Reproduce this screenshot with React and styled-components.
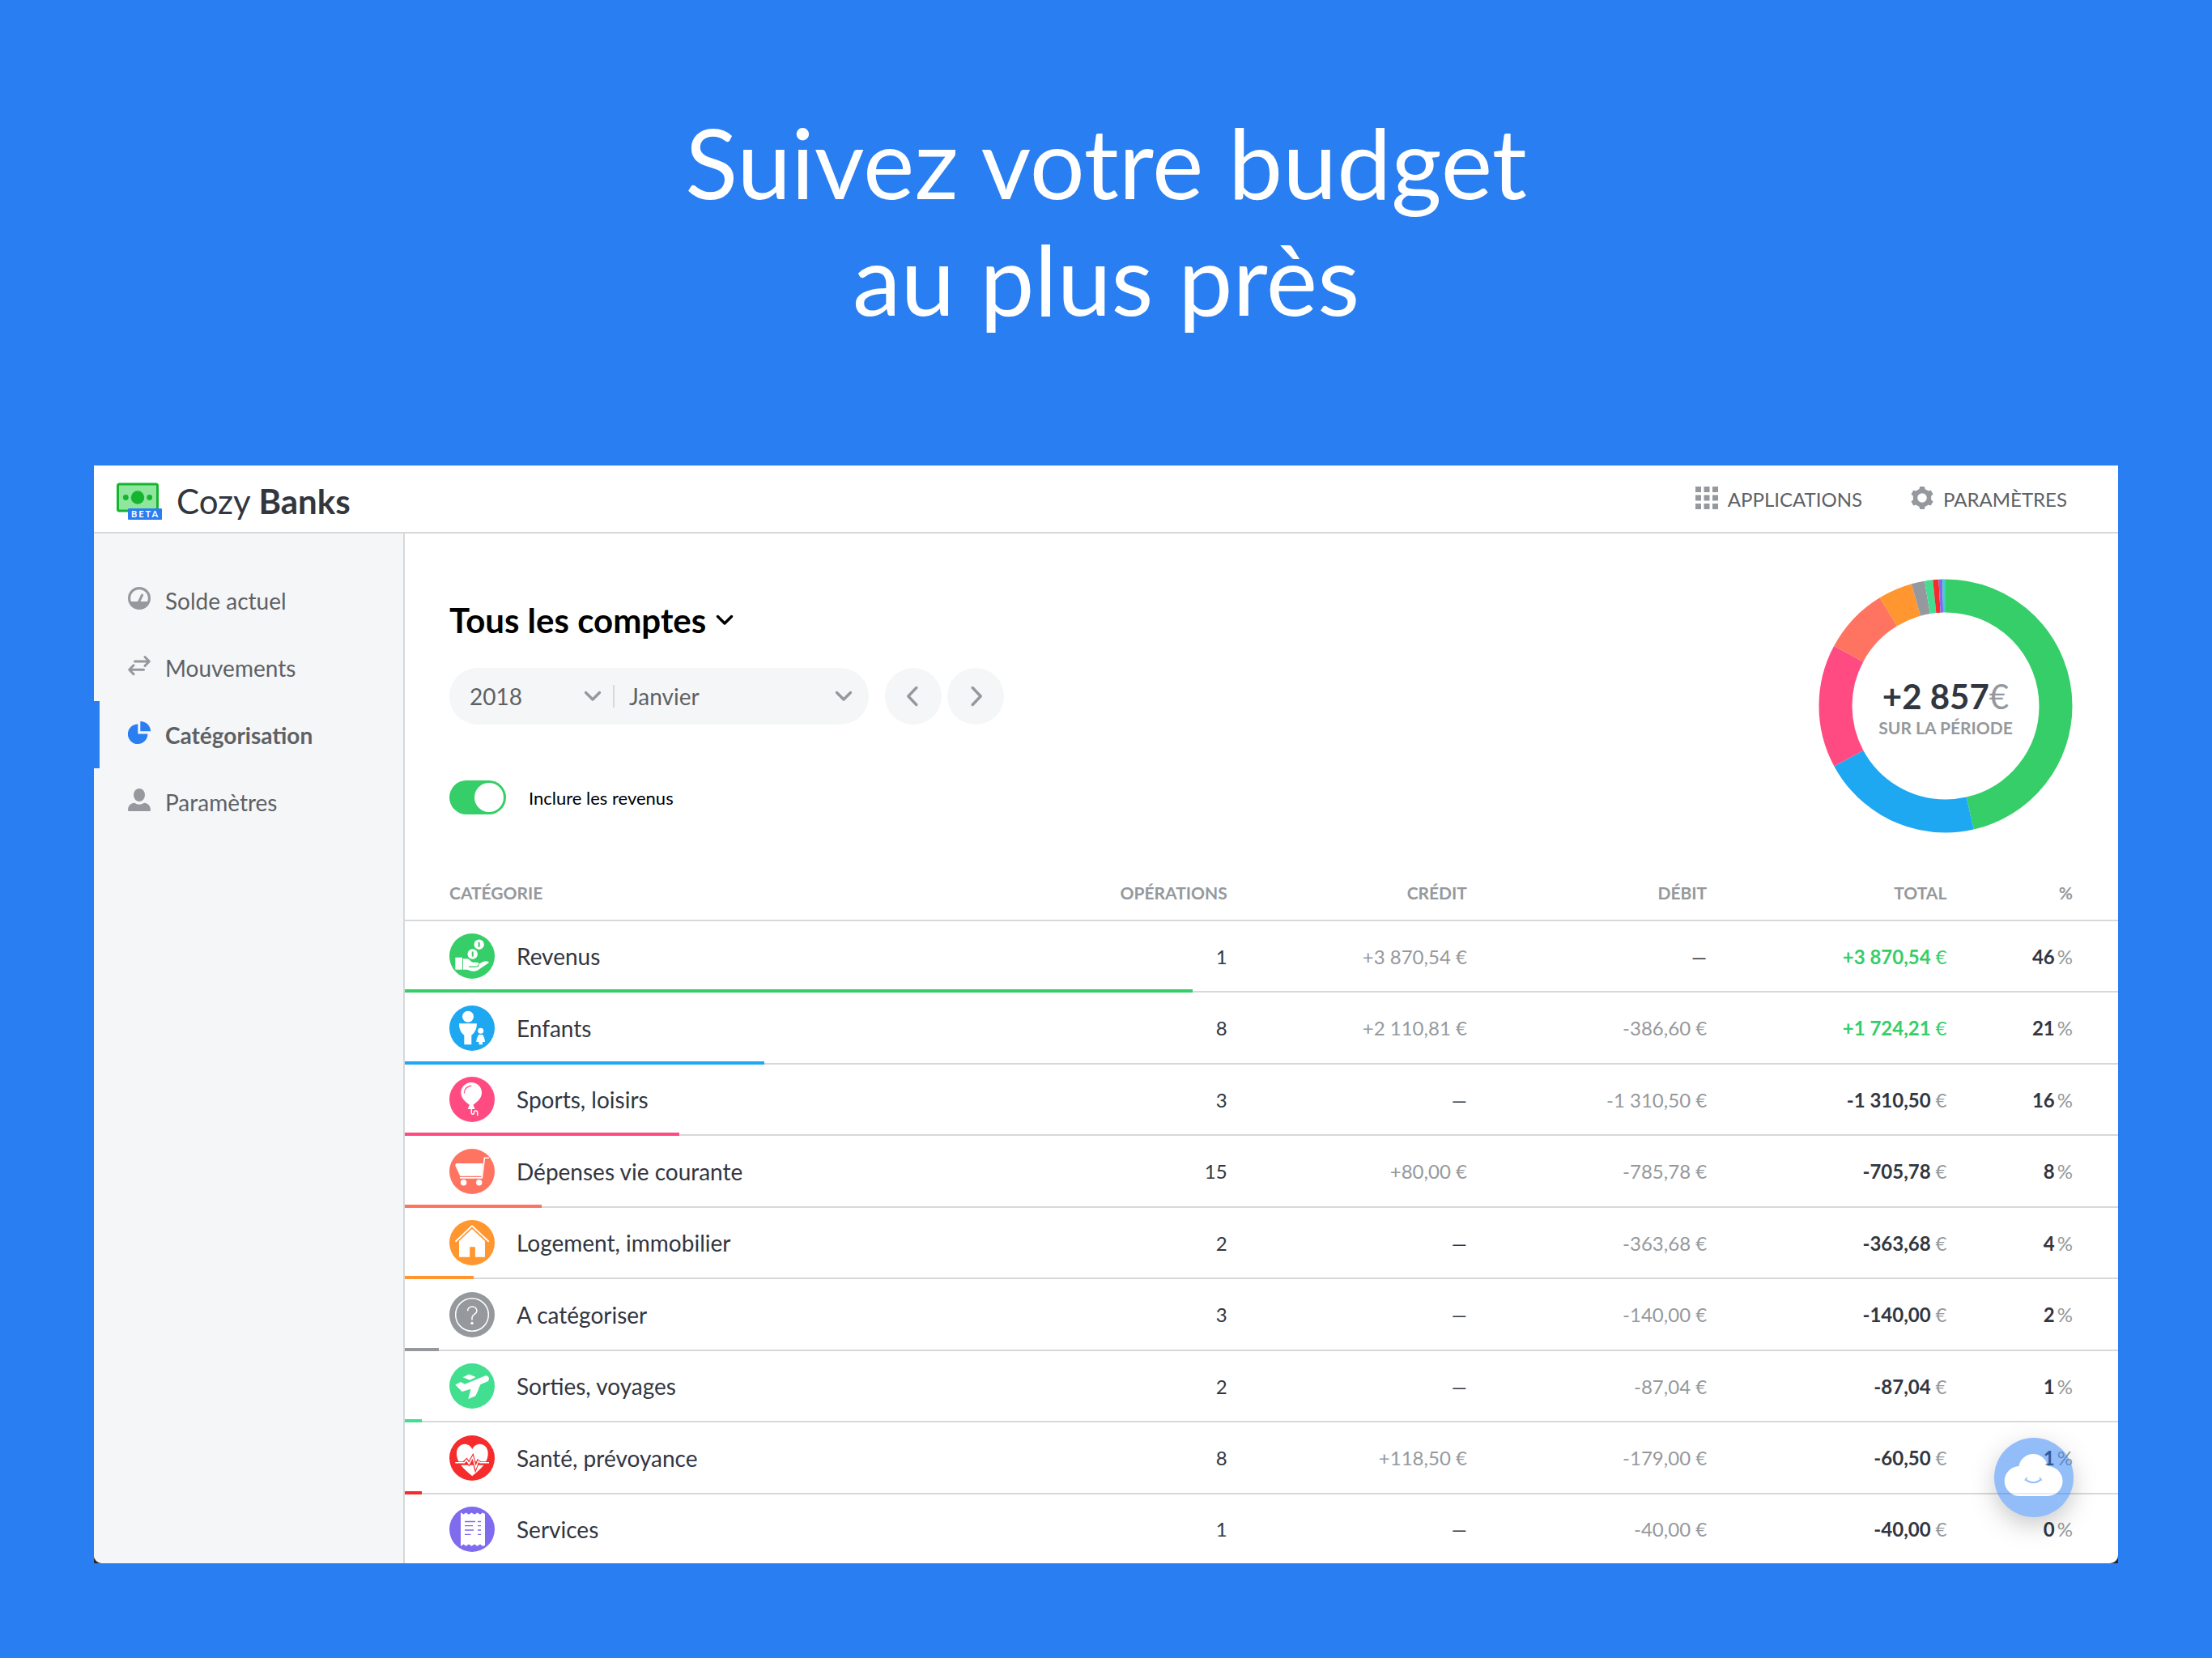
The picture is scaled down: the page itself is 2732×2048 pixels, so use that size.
import React, { useState } from "react";
import styled, { createGlobalStyle } from "styled-components";

const color = {
  blue: "#297ef2",
  charcoal: "#32363f",
  slate: "#5d6165",
  grey: "#95999d",
  silver: "#d6d8da",
  pale: "#f5f6f7",
  green: "#35ce68",
};

const GlobalStyle = createGlobalStyle`
  *, *::before, *::after { box-sizing: border-box; }
  body {
    margin: 0;
    background: ${color.blue};
    color: ${color.charcoal};
    font-family: Lato, "Liberation Sans", sans-serif;
    font-size: 24px;
  }
  button, select, input { font: inherit; color: inherit; margin: 0; }
  button { border: 0; padding: 0; background: none; cursor: pointer; }
`;

const Page = styled.div`
  min-height: 100vh;
  padding: 128px 116px 116px;
`;

const Headline = styled.h1`
  margin: 0 0 159px;
  color: #fff;
  font-size: 120px;
  font-weight: 400;
  line-height: 144px;
  text-align: center;
`;

const Frame = styled.div`
  background: #24292e;
`;

const AppWindow = styled.div`
  position: relative;
  background: #fff;
  border-radius: 0 0 10px 10px;
  overflow: hidden;
`;

const TopBar = styled.header`
  display: flex;
  align-items: center;
  justify-content: space-between;
  height: 84px;
  padding: 0 63px 0 28px;
  border-bottom: 2px solid ${color.silver};
`;

const Brand = styled.a`
  display: flex;
  align-items: center;
  gap: 18px;
  padding-top: 6px;
  color: ${color.charcoal};
  font-size: 42px;
  line-height: 48px;
  text-decoration: none;
`;

const Logo = styled.span`
  position: relative;
  display: block;
  width: 56px;
  height: 46px;
`;

const BetaBadge = styled.span`
  position: absolute;
  right: 0;
  bottom: 0;
  padding-left: 4px;
  width: 42px;
  border-radius: 1px;
  background: ${color.blue};
  color: #fff;
  font-size: 11px;
  font-weight: 700;
  letter-spacing: 2px;
  line-height: 14px;
`;

const TopLinks = styled.nav`
  display: flex;
  gap: 60px;
`;

const TopLink = styled.a`
  display: flex;
  align-items: center;
  gap: 12px;
  color: ${color.slate};
  font-size: 24px;
  text-decoration: none;
  text-transform: uppercase;

  svg { color: ${color.grey}; margin-bottom: 2px; }
`;

const Body = styled.div`
  display: flex;
`;

const Sidebar = styled.nav`
  flex: none;
  width: 384px;
  padding-top: 41px;
  background: ${color.pale};
  border-right: 2px solid ${color.silver};
`;

const NavItem = styled.a`
  display: flex;
  align-items: center;
  gap: 18px;
  height: 83px;
  padding-left: 35px;
  border-left: 7px solid ${(p) => (p.$active ? color.blue : "transparent")};
  color: ${color.slate};
  font-size: 28px;
  font-weight: ${(p) => (p.$active ? 700 : 400)};
  text-decoration: none;

  svg {
    margin-bottom: 6px;
    color: ${(p) => (p.$active ? color.blue : color.grey)};
  }
`;

const Main = styled.main`
  flex: 1;
  min-width: 0;
`;

const Summary = styled.section`
  display: flex;
  justify-content: space-between;
  align-items: flex-start;
  padding: 56px 56px 0 55px;
`;

const Filters = styled.div`
  display: flex;
  flex-direction: column;
  align-items: flex-start;
  padding-top: 26px;
`;

const AccountButton = styled.button`
  display: flex;
  align-items: center;
  gap: 12px;
  color: #000;
  font-size: 42px;
  font-weight: 700;
  line-height: 50px;
`;

const PeriodRow = styled.div`
  display: flex;
  align-items: center;
  gap: 7px;
  margin-top: 34px;
`;

const PeriodPill = styled.div`
  display: flex;
  align-items: center;
  height: 70px;
  margin-right: 13px;
  padding: 0 20px 0 25px;
  border-radius: 35px;
  background: ${color.pale};
  color: ${color.slate};
`;

const Field = styled.label`
  display: grid;
  align-items: center;
  width: ${(p) => p.$width}px;

  & > * { grid-area: 1 / 1; }
  svg { justify-self: end; pointer-events: none; color: ${color.grey}; }
`;

const Select = styled.select`
  appearance: none;
  width: 100%;
  height: 70px;
  padding: 0;
  border: 0;
  background: none;
  font-size: 28px;
`;

const Divider = styled.span`
  width: 2px;
  height: 28px;
  margin: 0 18px 0 14px;
  background: ${color.silver};
`;

const RoundButton = styled.button`
  display: flex;
  align-items: center;
  justify-content: center;
  width: 70px;
  height: 70px;
  border-radius: 50%;
  background: ${color.pale};
  color: ${color.grey};
`;

const ToggleLabel = styled.label`
  display: flex;
  align-items: center;
  gap: 28px;
  margin-top: 69px;
  color: #000;
  font-size: 22px;
`;

const Switch = styled.input`
  appearance: none;
  display: flex;
  align-items: center;
  width: 70px;
  height: 42px;
  padding: 0 3px;
  border-radius: 21px;
  background: ${(p) => (p.checked ? color.green : color.silver)};
  justify-content: ${(p) => (p.checked ? "flex-end" : "flex-start")};

  &::before {
    content: "";
    width: 36px;
    height: 36px;
    border-radius: 50%;
    background: #fff;
  }
`;

const DonutBox = styled.div`
  display: grid;
  place-items: center;
  width: 314px;
  height: 314px;

  & > * { grid-area: 1 / 1; }
`;

const DonutText = styled.div`
  padding-top: 6px;
  text-align: center;
`;

const DonutAmount = styled.div`
  font-size: 42px;
  font-weight: 700;
  line-height: 48px;
`;

const DonutCaption = styled.div`
  color: ${color.grey};
  font-size: 21px;
  font-weight: 700;
  line-height: 30px;
  text-transform: uppercase;
`;

const Unit = styled.span`
  color: ${(p) => (p.$inherit ? "inherit" : color.grey)};
  font-weight: 400;
`;

const PercentUnit = styled(Unit)`
  margin-left: 3px;
`;

const Table = styled.table`
  width: 100%;
  margin-top: 40px;
  border-collapse: separate;
  border-spacing: 0;
  table-layout: fixed;
`;

const Column = styled.col`
  width: ${(p) => p.$width}%;
`;

const HeadRow = styled.tr`
  height: 69px;
`;

const HeadCell = styled.th`
  padding: 0;
  border-bottom: 2px solid ${color.silver};
  color: ${color.grey};
  font-size: 21px;
  font-weight: 700;
  text-align: right;
  text-transform: uppercase;

  &:first-child { padding-left: 55px; text-align: left; }
  &:last-child { padding-right: 56px; }
`;

const Row = styled.tr`
  position: relative;
  height: 88px;

  &:nth-child(even) { height: 89px; }
  &:last-child { height: 85px; }
  &:last-child > td { border-bottom: 0; }
`;

const Cell = styled.td`
  padding: 0;
  border-bottom: 2px solid ${color.silver};
  color: ${(p) => (p.$muted ? color.grey : p.$positive ? color.green : color.charcoal)};
  font-weight: ${(p) => (p.$strong ? 700 : 400)};
  text-align: right;

  &:last-child { padding-right: 56px; }
`;

const NameCell = styled(Cell)`
  padding-left: 55px;
  font-size: 28px;
  text-align: left;
`;

const Name = styled.div`
  display: flex;
  align-items: center;
  gap: 27px;
`;

const Share = styled.span`
  position: absolute;
  left: 0;
  bottom: 0;
  height: 4px;
  background: ${(p) => p.$tint};
`;

const Assistant = styled.button`
  position: absolute;
  right: 55px;
  bottom: 57px;
  width: 98px;
  height: 98px;
  border-radius: 50%;
  background: ${color.blue};
  box-shadow: 0 10px 28px rgba(0, 0, 0, 0.4);
  opacity: 0.5;
`;

const svgProps = (w, h = w) => ({
  width: w,
  height: h,
  viewBox: `0 0 ${w} ${h}`,
  fill: "none",
  "aria-hidden": true,
});

const ChevronDown = ({ width = 3.4 }) => (
  <svg {...svgProps(22, 14)} stroke="currentColor" strokeWidth={width} strokeLinecap="round" strokeLinejoin="round">
    <path d="M2.5 2.5 11 11 19.5 2.5" />
  </svg>
);

const ChevronSide = ({ next }) => (
  <svg {...svgProps(16, 26)} stroke="currentColor" strokeWidth="3.4" strokeLinecap="round" strokeLinejoin="round">
    <path d={next ? "M4.2 2.5 14.2 13 4.2 23.5" : "M11.8 2.5 1.8 13 11.8 23.5"} />
  </svg>
);

const GridIcon = () => (
  <svg {...svgProps(28)} fill="currentColor">
    {[0, 10.5, 21].map((y) =>
      [0, 10.5, 21].map((x) => <rect key={`${x}-${y}`} x={x} y={y} width="7" height="7" />)
    )}
  </svg>
);

const GearIcon = () => (
  <svg {...svgProps(28)} fill="currentColor">
    <circle cx="14" cy="14" r="8.5" fill="none" stroke="currentColor" strokeWidth="5.4" />
    {[0, 60, 120, 180, 240, 300].map((a) => (
      <path key={a} d="M11.2 0h5.6l1.2 5h-8z" transform={`rotate(${a} 14 14)`} />
    ))}
  </svg>
);

const GaugeIcon = () => (
  <svg {...svgProps(28)} stroke="currentColor">
    <circle cx="14" cy="14" r="12.4" strokeWidth="3.2" />
    <path d="M1 18h26a13.6 13.6 0 0 1-26 0z" fill="currentColor" stroke="none" />
    <path d="M13.5 18.5 17.6 10" strokeWidth="3" strokeLinecap="round" />
  </svg>
);

const ArrowsIcon = () => (
  <svg {...svgProps(28)} stroke="currentColor" strokeWidth="3" strokeLinecap="round" strokeLinejoin="round">
    <path d="M8.5 9H26M21 3.5 26.3 9 21 14.5" />
    <path d="M19.5 19.2H2M7 13.8 1.7 19.2 7 24.7" />
  </svg>
);

const PieIcon = () => (
  <svg {...svgProps(28)} fill="currentColor">
    <path d="M12.3 3.4A12.3 12.3 0 1 0 24.4 15.5H12.3z" />
    <path d="M15.3 0A12.7 12.2 0 0 1 28 12.2H15.3z" />
  </svg>
);

const PersonIcon = () => (
  <svg {...svgProps(28)} fill="currentColor">
    <ellipse cx="14" cy="8" rx="7" ry="8" />
    <path d="M1.2 28Q0 28 0 26.8C0 21 3.500 18.200 8 17.800Q14 21.500 20 17.800C24.500 18.200 28 21 28 26.800Q28 28 26.800 28z" />
  </svg>
);

const BankNote = () => (
  <svg {...svgProps(56, 46)}>
    <rect x="1.500" y="2" width="49" height="33" rx="2" fill="#8fe69d" stroke="#15b530" strokeWidth="3" />
    <circle cx="26" cy="18.500" r="8.200" fill="#15b530" />
    <circle cx="11.300" cy="18.500" r="3.400" fill="#15b530" />
    <circle cx="40.700" cy="18.500" r="3.400" fill="#15b530" />
  </svg>
);

const glyphs = {
  income: (c) => (
    <>
      <circle cx="36.700" cy="13.700" r="6.200" />
      <circle cx="28.700" cy="25.500" r="6.200" />
      <path d="M36.700 11.500v4.500M28.700 23.300v4.500" stroke={c} strokeWidth="2" strokeLinecap="round" />
      <path d="M7.300 29.700h8.800v15H7.300z" />
      <path d="M17 31.300h5c3.500 0 4 4.500 8 4.500h4c1.600 0 2.400.8 2.500 2L41.500 35c3-1.200 6.500-.8 7.500 1L35.500 45.300c-3 1.800-7 1.800-10 .8L22 44.700h-5z" />
      <path d="M24 41.200h8.500c2.400 0 3.600-1.200 3.800-3" fill="none" stroke={c} strokeWidth="1.200" />
    </>
  ),
  children: () => (
    <>
      <circle cx="23" cy="13.700" r="7" />
      <path d="M12 22.300h21.800c.4 6-2.300 11.300-6.500 14.400v11.600h-9V36.700c-4.200-3.100-6.700-8.400-6.300-14.400z" />
      <circle cx="38.700" cy="31.200" r="3.500" />
      <path d="M36.200 36h5c1.600 2.600 2.600 5.500 2.800 9h-3v3.300h-4.600V45h-3.200c.3-3.500 1.300-6.400 3-9z" />
    </>
  ),
  leisure: (c) => (
    <>
      <path d="M27.200 7C34.500 7 40 12.600 40 19.700c0 7.300-6.300 11.800-10.500 15.100l2 5.200h-8.800l2.200-5.200C20.600 31.500 14.300 27 14.300 19.700 14.300 12.600 19.900 7 27.200 7z" />
      <path d="M18.300 20.500c.3-5 3.700-8.700 9-9.300" fill="none" stroke={c} strokeWidth="1.200" />
      <path d="M27.300 39.500v4.700c0 3.300 3.700 2.300 3.200-.2-.5-2.500 4-2.700 4.200.2v3.800" fill="none" stroke="#fff" strokeWidth="1.500" />
    </>
  ),
  shopping: () => (
    <>
      <path d="M9 18h32.500L40 33.700H13.300L7.500 21.300Q7 18 9 18z" />
      <path d="M13 35.900h27.300L43.400 11.300H49" fill="none" stroke="#fff" strokeWidth="1.600" />
      <circle cx="17.600" cy="41.700" r="3.700" />
      <circle cx="36.700" cy="41.700" r="3.700" />
    </>
  ),
  home: () => (
    <>
      <path d="M7.500 26.700 28 7.200 48.700 26.700" fill="none" stroke="#fff" strokeWidth="1.900" />
      <path d="M28 10.900 44 26v19.700H31.900V33.200h-6.700v12.500H12V26z" />
    </>
  ),
  unknown: () => (
    <g fill="none" stroke="#fff" strokeWidth="1.500">
      <circle cx="28" cy="28" r="20.300" />
      <path d="M22.600 23.300c0-7.200 11.300-7.200 11.300.2 0 4-5.900 3.700-5.900 8v3" />
      <circle cx="28" cy="38.400" r="1.700" fill="#fff" stroke="none" />
    </g>
  ),
  travel: () => (
    <>
      <path d="M7.300 26.500 14 23l5 2.700 25-10.300c4.700-1 6.500 4 3.500 6.800l-9 3.700C36 31 34.700 36.500 32 40.500L23.300 44l3.200-12.200-10.800 3.300z" />
      <path d="M16.500 17.300 24.300 13.600 32.700 17 25.300 20.800z" />
    </>
  ),
  health: (c) => (
    <>
      <path d="M28.300 50.300C21 44 9 35.500 9 22.300 9 9.500 23.500 6.800 28.300 17.200 33 6.800 47.700 9.500 47.700 22.300 47.700 35.500 35.600 44 28.300 50.300z" />
      <path d="M7.300 34.500H49" fill="none" stroke={c} strokeWidth="4.500" />
      <path d="M18 33.700 21.300 30.500 24.300 35 28.800 26.800 32.300 40.300 35.500 32 38 33.700" fill="none" stroke={c} strokeWidth="3.800" />
      <path d="M7.300 33.700H18.500L21.300 30.500 24.300 35.200 28.800 26.800 32.500 40.300 35.500 32 38 33.700H49" fill="none" stroke="#fff" strokeWidth="1.500" />
    </>
  ),
  services: (c) => (
    <>
      <path d="M14 7.300 17.500 9.500 20.500 7.500 24 9.700 27.500 7.500 31 9.700 34.500 7.500 38 9.700 41 7.500 44 9V48l-3 .7-3-2.200-3.500 2.200-3.500-2.200-3.500 2.200-3.500-2.200-3.500 2.200-3-2.200L14 49z" />
      <path d="M19 18.500h13M19 23.700h10M19 29h11M19 34.300h7.500M35 18.500h4M35 23.700h4M35 29h4M35 34.300h4" stroke={c} strokeWidth="1.300" />
    </>
  ),
};

const CategoryIcon = ({ kind, tint }) => (
  <svg {...svgProps(56)} fill="#fff">
    <circle cx="28" cy="28" r="28" fill={tint} />
    {glyphs[kind](tint)}
  </svg>
);

const CloudIcon = () => (
  <svg {...svgProps(98)}>
    <path d="M32 72a18.300 18.300 0 0 1-1.500-37A18 18 0 0 1 66 35a18.300 18.300 0 0 1 0 37z" fill="#fff" />
    <path d="M39.500 51.800c4.500 4.600 13 4.600 17.500 0" stroke={color.blue} strokeWidth="2" />
    <path d="M37.800 52.700 40.500 49M58.700 52.700 56 49" stroke={color.blue} strokeWidth="1.500" />
  </svg>
);

const categories = [
  { name: "Revenus", icon: "income", tint: "#35ce68", operations: 1, credit: "+3 870,54", debit: null, total: "+3 870,54", weight: 3870.54, percent: 46 },
  { name: "Enfants", icon: "children", tint: "#1ea8f1", operations: 8, credit: "+2 110,81", debit: "-386,60", total: "+1 724,21", weight: 1724.21, percent: 21 },
  { name: "Sports, loisirs", icon: "leisure", tint: "#ff4b82", operations: 3, credit: null, debit: "-1 310,50", total: "-1 310,50", weight: 1310.5, percent: 16 },
  { name: "Dépenses vie courante", icon: "shopping", tint: "#ff7461", operations: 15, credit: "+80,00", debit: "-785,78", total: "-705,78", weight: 705.78, percent: 8 },
  { name: "Logement, immobilier", icon: "home", tint: "#ff962f", operations: 2, credit: null, debit: "-363,68", total: "-363,68", weight: 363.68, percent: 4 },
  { name: "A catégoriser", icon: "unknown", tint: "#95999d", operations: 3, credit: null, debit: "-140,00", total: "-140,00", weight: 140, percent: 2 },
  { name: "Sorties, voyages", icon: "travel", tint: "#42df90", operations: 2, credit: null, debit: "-87,04", total: "-87,04", weight: 87.04, percent: 1 },
  { name: "Santé, prévoyance", icon: "health", tint: "#f62c2c", operations: 8, credit: "+118,50", debit: "-179,00", total: "-60,50", weight: 60.5, percent: 1 },
  { name: "Services", icon: "services", tint: "#7f6bee", operations: 1, credit: null, debit: "-40,00", total: "-40,00", weight: 40, percent: 0 },
];

const slices = [...categories.map(({ tint, weight }) => ({ tint, weight })), { tint: "#40cfc4", weight: 34 }];

const Donut = () => {
  const total = slices.reduce((sum, s) => sum + s.weight, 0);
  let start = 0;
  return (
    <svg {...svgProps(314)}>
      <g transform="rotate(-90 157 157)">
        {slices.map((s, i) => {
          const share = (s.weight / total) * 100;
          const offset = -start;
          start += share;
          return (
            <circle
              key={i}
              cx="157"
              cy="157"
              r="136"
              pathLength="100"
              stroke={s.tint}
              strokeWidth="41"
              strokeDasharray={`${share} ${100 - share}`}
              strokeDashoffset={offset}
            />
          );
        })}
      </g>
    </svg>
  );
};

const Amount = ({ value, inherit }) =>
  value ? (
    <>
      {value} <Unit $inherit={inherit}>€</Unit>
    </>
  ) : (
    "—"
  );

const navItems = [
  { label: "Solde actuel", Icon: GaugeIcon },
  { label: "Mouvements", Icon: ArrowsIcon },
  { label: "Catégorisation", Icon: PieIcon, active: true },
  { label: "Paramètres", Icon: PersonIcon },
];

export default function App() {
  const [includeIncome, setIncludeIncome] = useState(true);

  return (
    <Page>
      <GlobalStyle />
      <Headline>
        Suivez votre budget
        <br />
        au plus près
      </Headline>
      <Frame>
        <AppWindow>
          <TopBar>
            <Brand href="#">
              <Logo>
                <BankNote />
                <BetaBadge>BETA</BetaBadge>
              </Logo>
              <span>
                Cozy <b>Banks</b>
              </span>
            </Brand>
            <TopLinks>
              <TopLink href="#applications">
                <GridIcon />
                Applications
              </TopLink>
              <TopLink href="#settings">
                <GearIcon />
                Paramètres
              </TopLink>
            </TopLinks>
          </TopBar>
          <Body>
            <Sidebar>
              {navItems.map(({ label, Icon, active }) => (
                <NavItem key={label} href="#" $active={active} aria-current={active ? "page" : undefined}>
                  <Icon />
                  {label}
                </NavItem>
              ))}
            </Sidebar>
            <Main>
              <Summary>
                <Filters>
                  <AccountButton type="button">
                    Tous les comptes
                    <ChevronDown />
                  </AccountButton>
                  <PeriodRow>
                    <PeriodPill>
                      <Field $width={163}>
                        <Select aria-label="Année" defaultValue="2018">
                          <option>2018</option>
                        </Select>
                        <ChevronDown />
                      </Field>
                      <Divider />
                      <Field $width={276}>
                        <Select aria-label="Mois" defaultValue="Janvier">
                          <option>Janvier</option>
                        </Select>
                        <ChevronDown />
                      </Field>
                    </PeriodPill>
                    <RoundButton type="button" aria-label="Mois précédent">
                      <ChevronSide />
                    </RoundButton>
                    <RoundButton type="button" aria-label="Mois suivant">
                      <ChevronSide next />
                    </RoundButton>
                  </PeriodRow>
                  <ToggleLabel>
                    <Switch
                      type="checkbox"
                      checked={includeIncome}
                      onChange={(e) => setIncludeIncome(e.target.checked)}
                    />
                    Inclure les revenus
                  </ToggleLabel>
                </Filters>
                <DonutBox>
                  <Donut />
                  <DonutText>
                    <DonutAmount>
                      +2 857<Unit>€</Unit>
                    </DonutAmount>
                    <DonutCaption>Sur la période</DonutCaption>
                  </DonutText>
                </DonutBox>
              </Summary>
              <Table>
                <colgroup>
                  <Column $width={34} />
                  <Column $width={14} />
                  <Column $width={14} />
                  <Column $width={14} />
                  <Column $width={14} />
                  <Column $width={10} />
                </colgroup>
                <thead>
                  <HeadRow>
                    <HeadCell>Catégorie</HeadCell>
                    <HeadCell>Opérations</HeadCell>
                    <HeadCell>Crédit</HeadCell>
                    <HeadCell>Débit</HeadCell>
                    <HeadCell>Total</HeadCell>
                    <HeadCell>%</HeadCell>
                  </HeadRow>
                </thead>
                <tbody>
                  {categories.map((c) => (
                    <Row key={c.name}>
                      <NameCell>
                        <Name>
                          <CategoryIcon kind={c.icon} tint={c.tint} />
                          {c.name}
                        </Name>
                        <Share $tint={c.tint} style={{ width: `${c.percent}%` }} />
                      </NameCell>
                      <Cell>{c.operations}</Cell>
                      <Cell $muted={!!c.credit}>
                        <Amount value={c.credit} inherit />
                      </Cell>
                      <Cell $muted={!!c.debit}>
                        <Amount value={c.debit} inherit />
                      </Cell>
                      <Cell $strong $positive={c.total.startsWith("+")}>
                        <Amount value={c.total} inherit={c.total.startsWith("+")} />
                      </Cell>
                      <Cell $strong>
                        {c.percent}
                        <PercentUnit>%</PercentUnit>
                      </Cell>
                    </Row>
                  ))}
                </tbody>
              </Table>
            </Main>
          </Body>
          <Assistant type="button" aria-label="Assistant">
            <CloudIcon />
          </Assistant>
        </AppWindow>
      </Frame>
    </Page>
  );
}
